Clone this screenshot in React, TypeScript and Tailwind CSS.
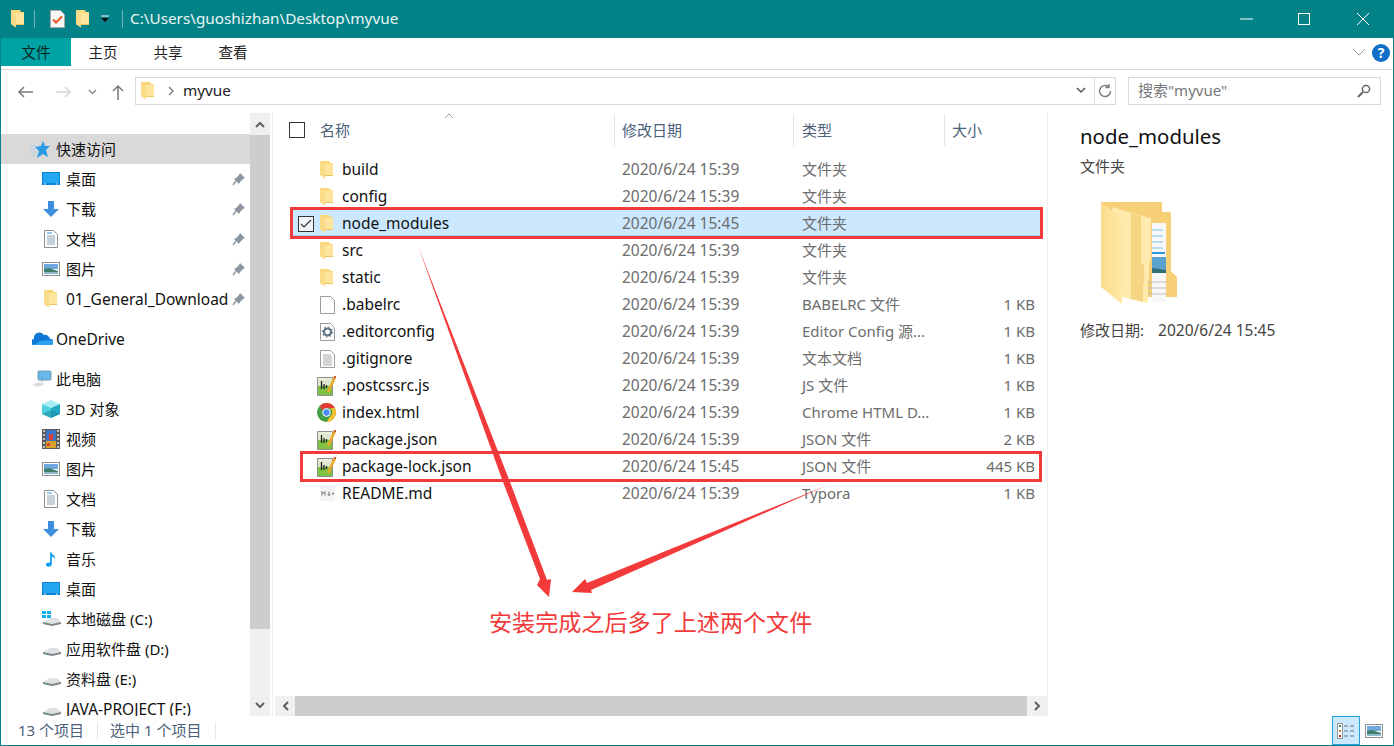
import React from "react";

const Folder = () => (
  <svg width="13" height="18" viewBox="0 0 13 18">
    <path d="M0 0h9l1 2h3v13H5v2.500L0 14z" fill="#fbd877" />
    <path d="M5 3h8v12H5z" fill="#fde59e" />
    <path d="M0 0l5 3v14.500L0 14z" fill="#f9db88" />
    <path d="M5 14h8v1H5z" fill="#eec45e" />
  </svg>
);

const Desktop = () => (
  <svg width="18" height="14" viewBox="0 0 18 14">
    <rect x="0" y="0" width="18" height="13" fill="#0a84d8" />
    <rect x="1" y="1" width="16" height="10" fill="#22a7f0" />
    <path d="M2 12h2M14 12h2" stroke="#d8eefc" />
  </svg>
);
const Download = () => (
  <svg width="18" height="18" viewBox="0 0 18 18">
    <path d="M6 1h6v8h5l-8 8-8-8h5z" fill="#3d8fdd" />
  </svg>
);
const Doc = () => (
  <svg className="ml-[2px]" width="14" height="18" viewBox="0 0 14 18">
    <path d="M.5.5h9l4 4v13H.5z" fill="#fff" stroke="#8f8f8f" />
    <path d="M3 6h8M3 8h8M3 10h8M3 12h8M3 14h8" stroke="#8aa4b8" />
    <path d="M3 3h5" stroke="#2f8fd8" />
  </svg>
);
const Pic = () => (
  <svg width="18" height="14" viewBox="0 0 18 14">
    <rect x=".5" y=".5" width="17" height="13" fill="#fff" stroke="#8f8f8f" />
    <rect x="2" y="2" width="14" height="5" fill="#6fa8dc" />
    <path d="M2 7l5-1 9 3v3H2z" fill="#3f7f6e" />
    <path d="M2 10h14v2H2z" fill="#8fb8c8" />
  </svg>
);
const Pin = () => (
  <svg width="14" height="14" viewBox="0 0 14 14">
    <path d="M8 1l5 5-2 1-3 3-1 2-5-5 2-1 3-3z" fill="#8c96a0" />
    <path d="M4 9l-3 4" stroke="#8c96a0" strokeWidth="1.400" />
  </svg>
);
const Star = () => (
  <svg className="-ml-[2px]" width="20" height="17" viewBox="0 0 20 17">
    <path d="M13 0l2 5h5l-4 4 2 7-5-3-6 4 2-7-4-4 6-1z" fill="#2b9be8" />
    <path d="M1 5h6M0 8h5M1 11h6M3 14h3" stroke="#a9cfea" />
  </svg>
);
const Cloud = () => (
  <svg width="21" height="14" viewBox="0 0 21 14">
    <path d="M2 13a3 3 0 0 1 0-6 5.500 5.500 0 0 1 10-4 5 5 0 0 1 6 4 3 3 0 0 1 1 6z" fill="#0f78d4" />
    <path d="M2 13h17a2.500 2.500 0 0 0 0-5L8 9z" fill="#2ca1ee" />
  </svg>
);
const PC = () => (
  <svg width="20" height="18" viewBox="0 0 20 18">
    <rect x="6" y="1" width="13" height="9" rx="1" fill="#66b8ea" stroke="#7a99ad" />
    <path d="M0 15l7-3 6 2-7 3z" fill="#d8dde0" />
    <path d="M10 10v2" stroke="#9aa" />
  </svg>
);
const Cube = () => (
  <svg width="18" height="18" viewBox="0 0 18 18">
    <path d="M9 0l9 4-9 4-9-4z" fill="#a6eef5" />
    <path d="M0 4l9 4v10l-9-4z" fill="#4fd0de" />
    <path d="M18 4l-9 4v10l9-4z" fill="#23a8c4" />
    <path d="M0 14l9-4 9 4-9 4z" fill="#1488a4" opacity=".55" />
  </svg>
);
const Film = () => (
  <svg width="18" height="20" viewBox="0 0 18 20">
    <rect width="18" height="20" fill="#5a5a5a" />
    <rect x="4" y="1" width="10" height="18" fill="#3f73c4" />
    <path d="M4 12h10v7H4z" fill="#d8a02a" />
    <path d="M7 5h4v6H7zM5 14h3v3H5z" fill="#d8403c" />
    <path d="M2 1v18M16 1v18" stroke="#e8e8e8" strokeWidth="1.500" strokeDasharray="2 2" />
  </svg>
);
const Music = () => (
  <svg className="ml-[3px]" width="12" height="18" viewBox="0 0 14 18">
    <path d="M6 1h1.500c.5 3 5 4 4.500 8-1-2-3-3-4-3v8.500c0 2-2 3.500-4 3.500s-3-1-3-2.500S2.500 13 6 13z" fill="#0a9cf0" />
  </svg>
);
const Drive = ({ win = false }: { win?: boolean }) => (
  <svg width="20" height="18" viewBox="0 0 20 18">
    <path d="M1 12l7-4h7l4 4-9 2z" fill="#dfe2e4" />
    <path d="M1 12l9 2 9-2v2l-9 2-9-2z" fill="#7f8487" />
    <path d="M4 14h3" stroke="#4caf50" />
    {win && <path d="M0 1h4v3H0zM5 1h4v3H5zM0 5h4v3H0zM5 5h4v3H5z" fill="#10b0f0" />}
  </svg>
);
const Notes = () => (
  <svg className="-ml-[3px]" width="20" height="21" viewBox="0 0 20 21">
    <path d="M.5 2.500h15v18H.5z" fill="#e9eedf" stroke="#8f8f8f" />
    <path d="M1 10h14v10H1z" fill="#7fc241" />
    <path d="M1 5h14v6H1z" fill="#dfe8cd" />
    <path d="M4.500 6v8M7 9v5M9.500 10v3" stroke="#222" strokeWidth="1.300" />
    <path d="M11 17L18 2" stroke="#eaa92a" strokeWidth="2.600" />
    <path d="M17 1.500l2 1" stroke="#c8351e" strokeWidth="1.500" />
  </svg>
);
const FileBlank = () => (
  <svg width="15" height="18" viewBox="0 0 15 18">
    <path d="M.5.500h10l4 4v13H.5z" fill="#fff" stroke="#9a9a9a" />
  </svg>
);
const FileCfg = () => (
  <svg width="15" height="18" viewBox="0 0 15 18">
    <path d="M.5.500h10l4 4v13H.5z" fill="#fff" stroke="#9a9a9a" />
    <circle cx="7.500" cy="9" r="3.500" fill="none" stroke="#5d7486" strokeWidth="2.200" />
    <circle cx="7.500" cy="9" r="5" fill="none" stroke="#5d7486" strokeWidth="1.200" strokeDasharray="1.500 2.400" />
  </svg>
);
const FileText = () => (
  <svg width="15" height="18" viewBox="0 0 15 18">
    <path d="M.5.500h10l4 4v13H.5z" fill="#fff" stroke="#9a9a9a" />
    <path d="M3 5h8M3 7h9M3 9h9M3 11h9M3 13h9M3 15h9" stroke="#a8a8a8" />
  </svg>
);
const Chrome = () => (
  <svg className="-ml-[3px]" width="19" height="19" viewBox="0 0 18 18">
    <circle cx="9" cy="9" r="9" fill="#43a047" />
    <path d="M9 0a9 9 0 0 1 8 5H9a4 4 0 0 0-4 2L2.500 3A9 9 0 0 1 9 0z" fill="#e53935" />
    <path d="M17 5a9 9 0 0 1-8 13l4-6a4 4 0 0 0-1-7z" fill="#fbc02d" />
    <circle cx="9" cy="9" r="4" fill="#fff" />
    <circle cx="9" cy="9" r="3" fill="#4a8af4" />
  </svg>
);
const Md = () => (
  <svg width="15" height="15" viewBox="0 0 15 15">
    <rect width="15" height="15" fill="#f4f4f4" />
    <path d="M2 9.500v-4l1.500 2 1.500-2v4M9 5.500v4M7.500 8L9 9.500 10.500 8M12 7.500h2M13 6.500v2" stroke="#777" fill="none" />
  </svg>
);
const BigFolder = () => (
  <svg width="78" height="106" viewBox="0 0 78 106">
    <defs>
      <linearGradient id="bf1" x1="0" y1="0" x2="1" y2="0">
        <stop offset="0" stopColor="#fbdd8c" />
        <stop offset="1" stopColor="#ffe9a8" />
      </linearGradient>
    </defs>
    <path d="M1 2h60a1 1 0 0 1 1 1v9h8a1 1 0 0 1 1 1v58l6 6v20H30V60z" fill="#f6cf77" />
    <path d="M52 23h14v79H52z" fill="#f8f8f8" />
    <path d="M52 30h11M52 36h11M52 42h11M52 48h11" stroke="#79bfe8" />
    <path d="M52 53h13" stroke="#2a94dc" strokeWidth="2" />
    <path d="M52 57h14v16H52z" fill="#5aa2cc" />
    <path d="M52 68l14 2v3H52z" fill="#2f6f72" />
    <path d="M48 82h18M48 88h18M48 94h18" stroke="#bdbdbd" />
    <path d="M12 7l3 1 35 10a1 1 0 0 1 1 1v40l-2 5v15l-1 2v22l-26-6z" fill="#feeaad" />
    <path d="M31 13l10 3v46l3 4v15l-1 3v18l-12-3z" fill="#f6d685" />
    <path d="M1 2l21 16a1 1 0 0 1 1 1v65l-1 20L1 87z" fill="url(#bf1)" />
  </svg>
);

const Sep = ({ color }: { color: string }) => <div className={`w-px h-[18px] ${color}`} />;

function NavRow({
  icon,
  label,
  pin,
  top,
  selected,
}: {
  icon: React.ReactNode;
  label: string;
  pin?: boolean;
  top?: boolean;
  selected?: boolean;
}) {
  const latin = /^[\x00-\x7f]+$/.test(label);
  return (
    <div
      className={`h-[30px] shrink-0 flex items-center leading-none text-[#111] whitespace-nowrap ${
        selected ? "bg-[#d9d9d9]" : ""
      } ${top ? "pl-[31px]" : "pl-[41px]"}`}
    >
      <div className="w-[25px] flex justify-start shrink-0">{icon}</div>
      <span className={`flex-1 -ml-px ${latin ? "text-[15.500px] pt-[2px]" : "text-[15px]"}`}>{label}</span>
      {pin && (
        <span className="mr-[4px] shrink-0">
          <Pin />
        </span>
      )}
    </div>
  );
}

const files: [React.ReactNode, string, string, string, string, boolean?][] = [
  [<Folder />, "build", "2020/6/24 15:39", "文件夹", ""],
  [<Folder />, "config", "2020/6/24 15:39", "文件夹", ""],
  [<Folder />, "node_modules", "2020/6/24 15:45", "文件夹", "", true],
  [<Folder />, "src", "2020/6/24 15:39", "文件夹", ""],
  [<Folder />, "static", "2020/6/24 15:39", "文件夹", ""],
  [<FileBlank />, ".babelrc", "2020/6/24 15:39", "BABELRC 文件", "1 KB"],
  [<FileCfg />, ".editorconfig", "2020/6/24 15:39", "Editor Config 源...", "1 KB"],
  [<FileText />, ".gitignore", "2020/6/24 15:39", "文本文档", "1 KB"],
  [<Notes />, ".postcssrc.js", "2020/6/24 15:39", "JS 文件", "1 KB"],
  [<Chrome />, "index.html", "2020/6/24 15:39", "Chrome HTML D...", "1 KB"],
  [<Notes />, "package.json", "2020/6/24 15:39", "JSON 文件", "2 KB"],
  [<Notes />, "package-lock.json", "2020/6/24 15:45", "JSON 文件", "445 KB"],
  [<Md />, "README.md", "2020/6/24 15:39", "Typora", "1 KB"],
];

export default function App() {
  return (
    <div className="relative w-[1394px] h-[746px] overflow-hidden bg-white border-x border-b border-[#038387] flex flex-col font-['Noto_Sans','Noto_Sans_CJK_SC',sans-serif]">
      {/* title bar */}
      <div className="h-[38px] shrink-0 bg-[#038387] -mx-px flex items-center text-white">
        <div className="ml-[11px] flex items-center">
          <Folder />
          <div className="ml-[10px]"><Sep color="bg-[#6bb5b7]" /></div>
          <div className="ml-[15px]">
            <svg width="15" height="18" viewBox="0 0 15 18">
              <path d="M.5.500h10l4 4v13H.5z" fill="#f7f7f7" stroke="#a8a8a8" />
              <path d="M3 9.500l3 3 6-6" stroke="#e8551f" strokeWidth="2" fill="none" />
            </svg>
          </div>
          <div className="ml-[11px]"><Folder /></div>
          <div className="ml-[11px]">
            <svg width="10" height="10" viewBox="0 0 10 10">
              <path d="M1 2h8" stroke="#fff" />
              <path d="M1 4h8L5 8z" fill="#111" />
            </svg>
          </div>
          <div className="ml-[12px]"><Sep color="bg-[#6bb5b7]" /></div>
        </div>
        <span className="ml-[7px] text-[15.300px] leading-none text-[#eaf6f6] whitespace-nowrap">C:\Users\guoshizhan\Desktop\myvue</span>
        <div className="ml-auto flex items-center">
          <svg className="mr-[45px]" width="13" height="2" viewBox="0 0 13 2"><path d="M0 1h13" stroke="#fff" /></svg>
          <svg className="mr-[45px]" width="13" height="13" viewBox="0 0 13 13"><rect x=".5" y=".5" width="11" height="11" fill="none" stroke="#fff" /></svg>
          <svg className="mr-[24px]" width="14" height="14" viewBox="0 0 14 14"><path d="M1 1l12 12M13 1L1 13" stroke="#fff" /></svg>
        </div>
      </div>

      {/* ribbon */}
      <div className="h-[32px] shrink-0 border-b border-[#dadbdc] flex text-[14.500px] leading-none text-[#222]">
        <div className="w-[70px] h-[28px] bg-[#00a3a3] flex items-center justify-center text-[#042424]">文件</div>
        <div className="w-[64px] h-[28px] flex items-center justify-center">主页</div>
        <div className="w-[66px] h-[28px] flex items-center justify-center">共享</div>
        <div className="w-[64px] h-[28px] flex items-center justify-center">查看</div>
        <div className="ml-auto h-[28px] flex items-start pt-[6px] pr-[3px]">
          <svg className="mt-[4px] mr-[6px]" width="14" height="8" viewBox="0 0 14 8"><path d="M1 1l6 6 6-6" stroke="#a0a0a0" fill="none" /></svg>
          <div className="w-[18px] h-[18px] rounded-full bg-[#0f6fc6] text-white text-[14px] font-bold flex items-center justify-center">?</div>
        </div>
      </div>

      {/* address row */}
      <div className="h-[43px] shrink-0 flex items-center">
        <svg className="ml-[16px]" width="16" height="12" viewBox="0 0 16 12"><path d="M16 6H2M7 1L2 6l5 5" stroke="#7a7a7a" strokeWidth="1.500" fill="none" /></svg>
        <svg className="ml-[23px]" width="16" height="12" viewBox="0 0 16 12"><path d="M0 6h14M9 1l5 5-5 5" stroke="#d6d6d6" strokeWidth="1.500" fill="none" /></svg>
        <svg className="ml-[16px]" width="9" height="6" viewBox="0 0 9 6"><path d="M1 1l3.500 3.500L8 1" stroke="#8a8a8a" strokeWidth="1.500" fill="none" /></svg>
        <svg className="ml-[15px]" width="12" height="16" viewBox="0 0 12 16"><path d="M6 16V2M1 7l5-5 5 5" stroke="#7a7a7a" strokeWidth="1.500" fill="none" /></svg>
        <div className="ml-[11px] w-[981px] h-[28px] border border-[#d9d9d9] flex items-center -translate-y-px">
          <div className="ml-[5px] flex"><Folder /></div>
          <svg className="ml-[14px]" width="6" height="10" viewBox="0 0 6 10"><path d="M1 1l4 4-4 4" stroke="#777" strokeWidth="1.200" fill="none" /></svg>
          <span className="ml-[9px] text-[15.300px] leading-none text-[#222]">myvue</span>
          <svg className="ml-auto mr-[8px]" width="10" height="7" viewBox="0 0 10 7"><path d="M1 1l4 4 4-4" stroke="#555" strokeWidth="1.500" fill="none" /></svg>
          <div className="w-[21px] h-full border-l border-[#d9d9d9] flex items-center justify-center">
            <svg width="14" height="14" viewBox="0 0 14 14"><path d="M12.500 7a5.500 5.500 0 1 1-2-4.200M11 0v3.500H7.500" stroke="#7a7a7a" strokeWidth="1.400" fill="none" /></svg>
          </div>
        </div>
        <div className="ml-[12px] w-[253px] h-[28px] border border-[#d9d9d9] flex items-center px-[9px] justify-between -translate-y-px">
          <span className="text-[15px] leading-none text-[#777]">搜索"myvue"</span>
          <svg width="14" height="14" viewBox="0 0 14 14"><circle cx="9" cy="5" r="3.600" stroke="#666" strokeWidth="1.500" fill="none" /><path d="M6 8l-5 5" stroke="#666" strokeWidth="2" /></svg>
        </div>
      </div>

      {/* main */}
      <div className="flex-1 min-h-0 flex">
        {/* sidebar */}
        <div className="w-[249px] shrink-0 flex flex-col overflow-hidden pt-[21px]">
          <NavRow top selected icon={<Star />} label="快速访问" />
          <NavRow icon={<Desktop />} label="桌面" pin />
          <NavRow icon={<Download />} label="下载" pin />
          <NavRow icon={<Doc />} label="文档" pin />
          <NavRow icon={<Pic />} label="图片" pin />
          <NavRow icon={<span className="ml-[2px] flex"><Folder /></span>} label="01_General_Download" pin />
          <div className="h-[10px] shrink-0" />
          <NavRow top icon={<Cloud />} label="OneDrive" />
          <div className="h-[10px] shrink-0" />
          <NavRow top icon={<PC />} label="此电脑" />
          <NavRow icon={<Cube />} label="3D 对象" />
          <NavRow icon={<Film />} label="视频" />
          <NavRow icon={<Pic />} label="图片" />
          <NavRow icon={<Doc />} label="文档" />
          <NavRow icon={<Download />} label="下载" />
          <NavRow icon={<Music />} label="音乐" />
          <NavRow icon={<Desktop />} label="桌面" />
          <NavRow icon={<Drive win />} label="本地磁盘 (C:)" />
          <NavRow icon={<Drive />} label="应用软件盘 (D:)" />
          <NavRow icon={<Drive />} label="资料盘 (E:)" />
          <NavRow icon={<Drive />} label="JAVA-PROJECT (F:)" />
        </div>
        {/* sidebar scrollbar */}
        <div className="w-[20px] shrink-0 bg-[#f0f0f0] flex flex-col">
          <div className="h-[22px] shrink-0 flex items-center justify-center">
            <svg width="10" height="7" viewBox="0 0 10 7"><path d="M1 6l4-4 4 4" stroke="#606060" strokeWidth="2" fill="none" /></svg>
          </div>
          <div className="h-[494px] shrink-0 bg-[#cdcdcd]" />
          <div className="flex-1" />
          <div className="h-[22px] shrink-0 flex items-center justify-center">
            <svg width="10" height="7" viewBox="0 0 10 7"><path d="M1 1l4 4 4-4" stroke="#606060" strokeWidth="2" fill="none" /></svg>
          </div>
        </div>
        <div className="w-[2px] shrink-0" />
        <div className="w-px shrink-0 bg-[#efefef]" />

        {/* list */}
        <div className="w-[774px] shrink-0 flex flex-col relative">
          <div className="h-[33px] shrink-0 flex items-center text-[15px] leading-none text-[#4c607a] relative pt-[1px]">
            <div className="ml-[16px] w-[16px] h-[16px] border border-[#333]" />
            <div className="ml-[15px] w-[294px]">名称</div>
            <div className="w-[179px] pl-[7px] flex items-center h-[32px] border-l border-[#e5e5e5]">修改日期</div>
            <div className="w-[151px] pl-[8px] flex items-center h-[32px] border-l border-[#e5e5e5]">类型</div>
            <div className="w-[100px] pl-[7px] flex items-center h-[32px] border-l border-[#e5e5e5]">大小</div>
            <svg className="absolute left-[171px] top-[0px]" width="10" height="6" viewBox="0 0 10 6"><path d="M1 5l4-4 4 4" stroke="#9a9a9a" fill="none" /></svg>
          </div>
          <div className="h-[9px] shrink-0" />
          {files.map(([icon, name, date, type, size, sel]) => (
            <div
              key={name}
              className={`h-[27px] shrink-0 flex items-center ml-[17px] mr-[5px] leading-none pt-[2px] ${
                sel ? "bg-[#cce8ff] border border-[#99d1ff]" : "pl-px"
              }`}
            >
              <div className="w-[29px] shrink-0 flex justify-center">
                {sel && (
                  <div className="w-[16px] h-[16px] border border-[#333] flex items-center justify-center bg-[#eef6fc]">
                    <svg width="12" height="10" viewBox="0 0 12 10"><path d="M1 5l3 3 7-7" stroke="#333" strokeWidth="1.200" fill="none" /></svg>
                  </div>
                )}
              </div>
              <div className="w-[22px] shrink-0 flex items-center">{icon}</div>
              <div className="w-[280px] shrink-0 text-[15.500px] text-[#111] whitespace-nowrap">{name}</div>
              <div className="w-[180px] shrink-0 text-[15.500px] text-[#6d6d6d] whitespace-nowrap">{date}</div>
              <div className="w-[150px] shrink-0 text-[15px] text-[#6d6d6d] whitespace-nowrap -mt-px">{type}</div>
              <div className="w-[83px] shrink-0 text-[15px] text-[#6d6d6d] text-right whitespace-nowrap -mt-px">{size}</div>
            </div>
          ))}
          <div className="flex-1" />
          <div className="h-[20px] shrink-0 ml-[2px] mr-0 bg-[#f0f0f0] flex items-center">
            <div className="w-[20px] flex justify-center">
              <svg width="7" height="10" viewBox="0 0 7 10"><path d="M6 1L2 5l4 4" stroke="#606060" strokeWidth="2" fill="none" /></svg>
            </div>
            <div className="flex-1 h-full bg-[#cdcdcd]" />
            <div className="w-[20px] flex justify-center">
              <svg width="7" height="10" viewBox="0 0 7 10"><path d="M1 1l4 4-4 4" stroke="#606060" strokeWidth="2" fill="none" /></svg>
            </div>
          </div>
        </div>

        {/* preview */}
        <div className="flex-1 border-l border-[#efefef] pl-[32px] pt-[12px] flex flex-col">
          <div className="text-[20.400px] leading-[22px] text-[#111]">node_modules</div>
          <div className="mt-[10px] text-[15px] leading-[18px] text-[#444]">文件夹</div>
          <div className="mt-[25px] ml-[20px]"><BigFolder /></div>
          <div className="mt-[15px] text-[15px] leading-[18px] text-[#444] whitespace-nowrap">
            修改日期:<span className="ml-[14px] text-[15.500px]">2020/6/24 15:45</span>
          </div>
        </div>
      </div>

      {/* status */}
      <div className="h-[29px] shrink-0 flex items-center text-[15px] leading-none text-[#4c607a]">
        <div className="w-[96px] pl-[17px]">13 个项目</div>
        <div className="w-px h-[18px] bg-[#e8e8e8]" />
        <div className="w-[117px] pl-[12px]">选中 1 个项目</div>
        <div className="w-px h-[18px] bg-[#e8e8e8]" />
        <div className="ml-auto flex items-center">
          <div className="w-[28px] h-[29px] bg-[#cce8ff] border border-[#26a0da] flex flex-col items-center justify-center">
            <svg width="18" height="16" viewBox="0 0 18 16">
              <rect x=".5" y=".5" width="5" height="15" fill="#fff" stroke="#999" />
              <path d="M2 2h2v2H2z" fill="#3f7f6e" /><path d="M2 7h2v2H2z" fill="#c08a3a" /><path d="M2 12h2v2H2z" fill="#c8281e" />
              <path d="M7 3h4M13 3h4M7 8h4M13 8h4M7 13h4M13 13h4" stroke="#707070" />
            </svg>
          </div>
          <div className="ml-[5px] mr-[10px]"><Pic /></div>
        </div>
      </div>

      {/* annotations */}
      <div className="absolute left-[289px] top-[207px] w-[753px] h-[32px] border-[3px] border-[#f33a3a]" />
      <div className="absolute left-[299px] top-[451px] w-[742px] h-[31px] border-[3px] border-[#f33a3a]" />
      <svg className="absolute left-[-1px] top-0 pointer-events-none" width="1394" height="746" viewBox="0 0 1394 746">
        <polygon points="418,246 510,482 547,580 551,579 549,597 537,585 540,579 503,482" fill="#f33a3a" />
        <polygon points="828,485 591,590 592,593 572,592 585,579 587,583" fill="#f33a3a" />
      </svg>
      <div className="absolute left-[488px] top-[607px] text-[23.100px] leading-[28px] text-[#f33a3a] whitespace-nowrap font-['Noto_Sans_CJK_SC',sans-serif]">
        安装完成之后多了上述两个文件
      </div>
    </div>
  );
}
